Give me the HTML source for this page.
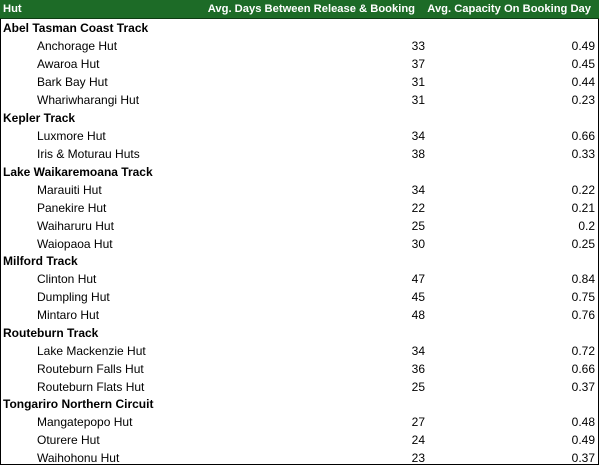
<!DOCTYPE html>
<html><head><style>
html,body{margin:0;padding:0;background:#fff;width:601px;height:466px;overflow:hidden}
.t{position:absolute;left:0;top:0;width:597px;height:464px;border:1px solid #000;border-top:none;}
.h{position:absolute;left:0;top:0;width:599px;height:18px;background:#1d6b27;border-bottom:1px solid #0d3a12}
.h span{position:absolute;top:3px;color:#fff;font:bold 11.2px "Liberation Sans",sans-serif;white-space:nowrap}
.r{position:absolute;left:0;width:599px;height:18px;font:12px "Liberation Sans",sans-serif;color:#000;white-space:nowrap}
.r .n{position:absolute;left:37px;top:2px}
.r.g .n{left:3px;font-weight:bold}
.r .a{position:absolute;right:174px;top:2px}
.r .b{position:absolute;right:4px;top:2px}
</style></head><body>
<div class="t"></div>
<div class="h"><span style="left:3px">Hut</span><span style="right:184px">Avg. Days Between Release &amp; Booking</span><span style="right:8px">Avg. Capacity On Booking Day</span></div>
<div class="r g" style="top:19px"><span class="n">Abel Tasman Coast Track</span></div>
<div class="r" style="top:37px"><span class="n">Anchorage Hut</span><span class="a">33</span><span class="b">0.49</span></div>
<div class="r" style="top:55px"><span class="n">Awaroa Hut</span><span class="a">37</span><span class="b">0.45</span></div>
<div class="r" style="top:73px"><span class="n">Bark Bay Hut</span><span class="a">31</span><span class="b">0.44</span></div>
<div class="r" style="top:91px"><span class="n">Whariwharangi Hut</span><span class="a">31</span><span class="b">0.23</span></div>
<div class="r g" style="top:109px"><span class="n">Kepler Track</span></div>
<div class="r" style="top:127px"><span class="n">Luxmore Hut</span><span class="a">34</span><span class="b">0.66</span></div>
<div class="r" style="top:145px"><span class="n">Iris &amp; Moturau Huts</span><span class="a">38</span><span class="b">0.33</span></div>
<div class="r g" style="top:163px"><span class="n">Lake Waikaremoana Track</span></div>
<div class="r" style="top:181px"><span class="n">Marauiti Hut</span><span class="a">34</span><span class="b">0.22</span></div>
<div class="r" style="top:199px"><span class="n">Panekire Hut</span><span class="a">22</span><span class="b">0.21</span></div>
<div class="r" style="top:217px"><span class="n">Waiharuru Hut</span><span class="a">25</span><span class="b">0.2</span></div>
<div class="r" style="top:235px"><span class="n">Waiopaoa Hut</span><span class="a">30</span><span class="b">0.25</span></div>
<div class="r g" style="top:252px"><span class="n">Milford Track</span></div>
<div class="r" style="top:270px"><span class="n">Clinton Hut</span><span class="a">47</span><span class="b">0.84</span></div>
<div class="r" style="top:288px"><span class="n">Dumpling Hut</span><span class="a">45</span><span class="b">0.75</span></div>
<div class="r" style="top:306px"><span class="n">Mintaro Hut</span><span class="a">48</span><span class="b">0.76</span></div>
<div class="r g" style="top:324px"><span class="n">Routeburn Track</span></div>
<div class="r" style="top:342px"><span class="n">Lake Mackenzie Hut</span><span class="a">34</span><span class="b">0.72</span></div>
<div class="r" style="top:360px"><span class="n">Routeburn Falls Hut</span><span class="a">36</span><span class="b">0.66</span></div>
<div class="r" style="top:378px"><span class="n">Routeburn Flats Hut</span><span class="a">25</span><span class="b">0.37</span></div>
<div class="r g" style="top:395px"><span class="n">Tongariro Northern Circuit</span></div>
<div class="r" style="top:413px"><span class="n">Mangatepopo Hut</span><span class="a">27</span><span class="b">0.48</span></div>
<div class="r" style="top:431px"><span class="n">Oturere Hut</span><span class="a">24</span><span class="b">0.49</span></div>
<div class="r" style="top:449px"><span class="n">Waihohonu Hut</span><span class="a">23</span><span class="b">0.37</span></div>
</body></html>
